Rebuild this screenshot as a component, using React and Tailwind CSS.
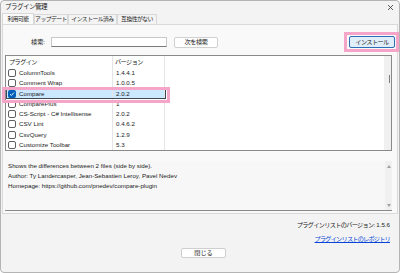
import React from "react";

const plugins = [
  { name: "ColumnTools", version: "1.4.4.1" },
  { name: "Comment Wrap", version: "1.0.0.5" },
  { name: "Compare", version: "2.0.2", checked: true },
  { name: "ComparePlus", version: "1" },
  { name: "CS-Script - C# Intellisense", version: "2.0.2" },
  { name: "CSV Lint", version: "0.4.6.2" },
  { name: "CsvQuery", version: "1.2.9" },
  { name: "Customize Toolbar", version: "5.3" },
];

const tabs = [
  { label: "利用可能", w: "w-[32px]", active: true },
  { label: "アップデート", w: "w-[34px]" },
  { label: "インストール済み", w: "w-[49px]" },
  { label: "互換性がない", w: "w-[40px]" },
];

const Checkbox = ({ checked }) =>
  checked ? (
    <span className="w-[8px] h-[8px] rounded-[2px] bg-[#005fb8] flex items-center justify-center shrink-0">
      <svg width="6" height="6" viewBox="0 0 6 6">
        <path d="M1 3.2 L2.4 4.5 L5 1.5" stroke="#fff" strokeWidth="0.9" fill="none" />
      </svg>
    </span>
  ) : (
    <span className="w-[8px] h-[8px] rounded-[2px] border border-[#5f5f5f] bg-white shrink-0" />
  );

const App = () => {
  return (
    <div
      className="w-[400px] h-[273px] bg-[#f3f3f3] border border-[#b4b4b4] rounded-[4px] overflow-hidden flex flex-col text-[6.2px] text-[#1b1b1b] leading-[10px]"
      style={{ fontFamily: '"Liberation Sans", "Noto Sans CJK JP", sans-serif' }}
    >
      {/* title bar */}
      <div className="h-[12px] flex items-center justify-between pl-[4px] pr-[5px]">
        <span className="text-[6.5px] tracking-[-0.5px]">プラグイン管理</span>
        <svg width="7" height="7" viewBox="0 0 7 7">
          <path d="M1 1 L6 6 M6 1 L1 6" stroke="#333" strokeWidth="0.8" />
        </svg>
      </div>

      {/* tabs */}
      <div className="h-[11px] flex items-end pl-[1px]">
        {tabs.map((t) => (
          <div
            key={t.label}
            className={`${t.w} ${
              t.active ? "h-[11px] bg-[#f9f9f9]" : "h-[10px] bg-[#f3f3f3]"
            } border-t border-l border-r border-[#d9d9d9] flex items-center justify-center whitespace-nowrap text-[5.8px] tracking-[-0.5px] leading-[9px]`}
          >
            {t.label}
          </div>
        ))}
      </div>

      {/* tab panel */}
      <div className="mx-[1px] h-[190px] border border-[#d9d9d9] bg-[#f9f9f9] pl-[2px] pr-[5px] flex flex-col">
        {/* search row */}
        <div className="mt-[11px] h-[12px] flex items-center">
          <span className="ml-[26px] w-[20px] text-[6.2px]">検索:</span>
          <div className="w-[116px] h-[10px] bg-white border border-[#c8c8c8] border-b-[#7a7a7a]" />
          <div className="ml-[7px] w-[44px] h-[11px] bg-white border border-[#d0d0d0] rounded-[2px] flex items-center justify-center tracking-[-0.4px]">
            次を検索
          </div>
          <div className="relative ml-auto -mr-[3px]">
            <div className="w-[46px] h-[12px] bg-[#e0eef9] border border-[#2d6fb4] rounded-[2px] flex items-center justify-center tracking-[-0.6px]">
              インストール
            </div>
            <div className="absolute -left-[5px] -top-[4px] w-[55px] h-[20px] border-[3px] border-[#f5a6c8]" />
          </div>
        </div>

        {/* plugin list */}
        <div className="relative mt-[7px] h-[96px] bg-white border border-[#8a8a8a] flex">
          <div className="flex-1 flex flex-col">
            <div className="h-[12px] flex items-center">
              <div className="w-[107px] h-full border-r border-[#e5e5e5] pl-[3px] flex items-center tracking-[-0.6px]">
                プラグイン
              </div>
              <div className="w-[52px] h-full border-r border-[#e5e5e5] pl-[2px] flex items-center tracking-[-0.6px]">
                バージョン
              </div>
            </div>
            {plugins.map((p) => (
              <div
                key={p.name}
                className={`h-[10.3px] flex w-[160px] ${
                  p.checked ? "bg-[#cce8ff] outline outline-1 -outline-offset-1 outline-[#3d4854]" : ""
                }`}
              >
                <div className="w-[107px] border-r border-[#e5e5e5] flex items-center pl-[2px] gap-[3px]">
                  <Checkbox checked={p.checked} />
                  <span className="whitespace-nowrap">{p.name}</span>
                </div>
                <div className="w-[52px] border-r border-[#e5e5e5] flex items-center pl-[3px]">
                  {p.version}
                </div>
              </div>
            ))}
            <div className="flex-1 flex">
              <div className="w-[107px] border-r border-[#e5e5e5]" />
              <div className="w-[52px] border-r border-[#e5e5e5]" />
            </div>
          </div>
          <div className="w-[7px] bg-[#f0f0f0] flex justify-end pr-[1px] pt-[19px]">
            <div className="w-[1.5px] h-[8px] bg-[#7d7d7d]" />
          </div>
          {/* highlight */}
          <div className="absolute -left-[4px] top-[31px] w-[168px] h-[16px] border-[3px] border-[#f5a6c8]" />
        </div>

        {/* description */}
        <div className="mt-[10px] h-[50px] border-b border-[#8a8a8a] bg-[#f7f7f7] flex">
          <div className="flex-1 pl-[3px] flex flex-col">
            <span>Shows the differences between 2 files (side by side).</span>
            <span>Author: Ty Landercasper, Jean-Sebastien Leroy, Pavel Nedev</span>
            <span>Homepage: https://github.com/pnedev/compare-plugin</span>
          </div>
          <div className="w-[7px] bg-[#f0f0f0] flex flex-col items-center justify-between pt-[4px] pb-[3px]">
            <svg width="4" height="3" viewBox="0 0 4 3">
              <path d="M0 3 L2 0 L4 3 Z" fill="#a0a0a0" />
            </svg>
            <svg width="4" height="3" viewBox="0 0 4 3">
              <path d="M0 0 L2 3 L4 0 Z" fill="#a0a0a0" />
            </svg>
          </div>
        </div>
      </div>

      {/* footer */}
      <div className="flex-1 flex flex-col items-end pr-[9px] pt-[6px]">
        <span>
          <span className="tracking-[-0.7px]">プラグインリストのバージョン:</span> 1.5.6
        </span>
        <span className="mt-[4px] text-[#0645d8] underline tracking-[-0.8px]">
          プラグインリストのレポジトリ
        </span>
        <div className="self-start ml-[180px] mt-[4px] w-[45px] h-[10px] bg-white border border-[#cfcfcf] rounded-[2px] flex items-center justify-center">
          閉じる
        </div>
      </div>
    </div>
  );
};

export default App;
